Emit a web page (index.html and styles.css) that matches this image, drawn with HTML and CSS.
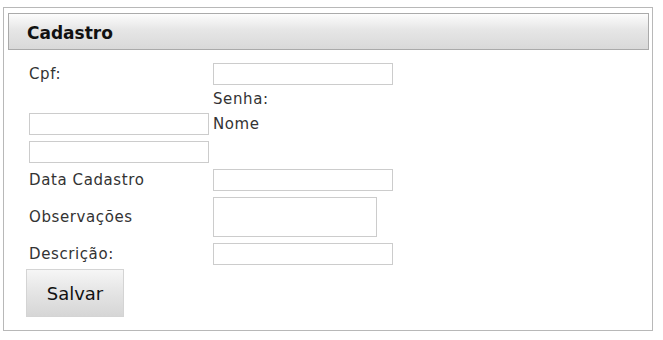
FILE: index.html
```html
<!DOCTYPE html>
<html lang="pt-BR">
<head>
  <meta charset="UTF-8">
  <meta name="viewport" content="width=device-width, initial-scale=1.0">
  <title>Cadastro</title>
  <link rel="stylesheet" href="styles.css">
</head>
<body>
  <div class="panel">
    <div class="panel-header">Cadastro</div>

    <form id="cadastroForm">
      <div class="form-grid">
        <label for="cpf">Cpf:</label>
        <input type="text" id="cpf">

        <span></span>
        <label for="senha">Senha:</label>

        <input type="password" id="senha">
        <label for="nome">Nome</label>

        <input type="text" id="nome">
        <span></span>

        <label for="dataCadastro">Data Cadastro</label>
        <input type="text" id="dataCadastro">

        <label for="observacoes">Observações</label>
        <textarea id="observacoes"></textarea>

        <label for="descricao">Descrição:</label>
        <input type="text" id="descricao">
      </div>

      <button type="submit">Salvar</button>
    </form>
  </div>
</body>
</html>
```

FILE: styles.css
```css
body {
  margin: 0;
  font-family: 'DejaVu Sans', Verdana, sans-serif;
  color: #222;
  background: #fff;
}

.panel {
  box-sizing: border-box;
  width: 650px;
  height: 324px;
  margin: 7px 0 0 3px;
  padding: 5px 3px 0 4px;
  border: 1px solid #b8b8b8;
}

.panel-header {
  box-sizing: border-box;
  height: 37px;
  padding: 3px 0 0 18px;
  border: 1px solid #aaa;
  background: linear-gradient(to bottom, #fcfcfc 0%, #e6e6e6 45%, #d9d9d9 100%);
  font-size: 17px;
  font-weight: bold;
  line-height: 32px;
  color: #111;
}

.form-grid {
  display: grid;
  grid-template-columns: 180px 180px;
  column-gap: 4px;
  row-gap: 6px;
  align-items: center;
  margin: 13px 0 0 21px;
}

label {
  font-size: 15px;
  line-height: 16px;
  letter-spacing: 0.6px;
  color: #333;
}

input[type="text"],
input[type="password"],
textarea {
  box-sizing: border-box;
  width: 180px;
  height: 22px;
  margin: 0;
  padding: 2px;
  border: 1px solid #ccc;
  font-family: inherit;
  font-size: 13px;
}

textarea {
  width: 164px;
  height: 40px;
  resize: none;
}

button {
  box-sizing: border-box;
  width: 98px;
  height: 48px;
  margin: 4px 0 0 18px;
  border: 1px solid #d4d4d4;
  background: linear-gradient(to bottom, #f6f6f6 0%, #e4e4e4 50%, #d6d6d6 100%);
  font-family: inherit;
  font-size: 18px;
  color: #111;
  cursor: pointer;
}
```
